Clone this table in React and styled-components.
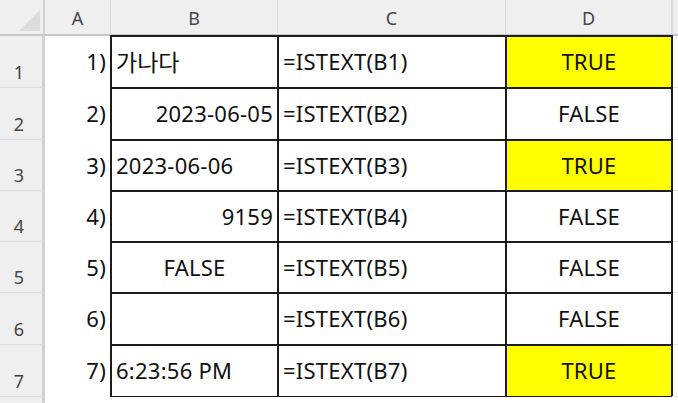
import React from "react";
import styled, { createGlobalStyle } from "styled-components";

const GlobalStyle = createGlobalStyle`
  html, body {
    margin: 0;
    padding: 0;
    background: #ffffff;
  }
  body {
    font-family: "Noto Sans", "Noto Sans CJK KR", sans-serif;
  }
`;

const COLS = ["A", "B", "C", "D"];
const ROW_HEIGHTS = [52, 52, 51, 51, 51, 52, 52];

const rows = [
  { b: "가나다", bAlign: "left", d: "TRUE", cjk: true },
  { b: "2023-06-05", bAlign: "right", d: "FALSE" },
  { b: "2023-06-06", bAlign: "left", d: "TRUE" },
  { b: "9159", bAlign: "right", d: "FALSE" },
  { b: "FALSE", bAlign: "center", d: "FALSE" },
  { b: "", bAlign: "left", d: "FALSE" },
  { b: "6:23:56 PM", bAlign: "left", d: "TRUE" }
];

const Sheet = styled.div`
  display: grid;
  grid-template-columns: 45px 66px 167px 228px 166px 1fr;
  grid-template-rows: 36px ${ROW_HEIGHTS.map(h => `${h}px`).join(" ")} 1fr;
  width: 678px;
  height: 403px;
  overflow: hidden;
  background: #ffffff;
`;

const Corner = styled.div`
  position: relative;
  background: #efefef;
  border-bottom: 2px solid #c6c6c6;
  border-right: 2px solid #d2d2d2;
  box-sizing: border-box;
  &::after {
    content: "";
    position: absolute;
    right: 3px;
    bottom: 3px;
    width: 0;
    height: 0;
    border-left: 21px solid transparent;
    border-bottom: 21px solid #dcdcdc;
  }
`;

const ColHead = styled.div`
  display: flex;
  align-items: center;
  justify-content: center;
  background: #efefef;
  border-bottom: 2px solid #c6c6c6;
  border-right: 1px solid #dadada;
  box-sizing: border-box;
  color: #454545;
  font-size: 18px;
  padding-top: 1px;
`;

const RowHead = styled.div`
  display: flex;
  align-items: flex-end;
  justify-content: center;
  padding-bottom: 6px;
  padding-right: 4px;
  background: #efefef;
  border-right: 3px solid #d2d2d2;
  border-bottom: 1px solid #dedede;
  box-sizing: border-box;
  color: #454545;
  font-size: 18px;
  line-height: 1;
`;

const Cell = styled.div`
  display: flex;
  align-items: center;
  justify-content: ${p =>
    p.$align === "right" ? "flex-end" : p.$align === "center" ? "center" : "flex-start"};
  padding: 0 ${p => (p.$align === "right" ? "5px" : "0")} 2px
    ${p => (p.$align === "left" ? "5px" : "0")};
  box-sizing: border-box;
  font-size: 22px;
  letter-spacing: 0.25px;
  color: #111111;
  white-space: nowrap;
  background: ${p => (p.$hilite ? "#ffff00" : "#ffffff")};
  ${p => p.$boxed && "outline: 2px solid #1c1c1c; outline-offset: -1px;"}
`;

const Hangul = styled.span`
  font-family: "Noto Sans CJK KR", sans-serif;
  font-size: 23px;
  letter-spacing: 0;
`;

const Filler = styled.div`
  background: #ffffff;
`;

const EdgeHead = styled.div`
  background: #efefef;
  border-bottom: 2px solid #c6c6c6;
  border-left: 1px solid #dadada;
`;

const EdgeCell = styled.div`
  border-bottom: 1px solid #e2e2e2;
`;

const RowHeadTail = styled.div`
  background: #efefef;
  border-right: 3px solid #d2d2d2;
  box-sizing: border-box;
`;

export default function App() {
  return (
    <>
      <GlobalStyle />
      <Sheet>
        <Corner />
        {COLS.map(c => (
          <ColHead key={c}>{c}</ColHead>
        ))}
        <EdgeHead />
        {rows.map((r, i) => (
          <React.Fragment key={i}>
            <RowHead>{i + 1}</RowHead>
            <Cell $align="right">{i + 1})</Cell>
            <Cell $align={r.bAlign} $boxed>
              {r.cjk ? <Hangul>{r.b}</Hangul> : r.b}
            </Cell>
            <Cell $align="left" $boxed>
              =ISTEXT(B{i + 1})
            </Cell>
            <Cell $align="center" $boxed $hilite={r.d === "TRUE"}>
              {r.d}
            </Cell>
            <EdgeCell />
          </React.Fragment>
        ))}
        <RowHeadTail />
        <Filler />
        <Filler />
        <Filler />
        <Filler />
        <Filler />
      </Sheet>
    </>
  );
}
